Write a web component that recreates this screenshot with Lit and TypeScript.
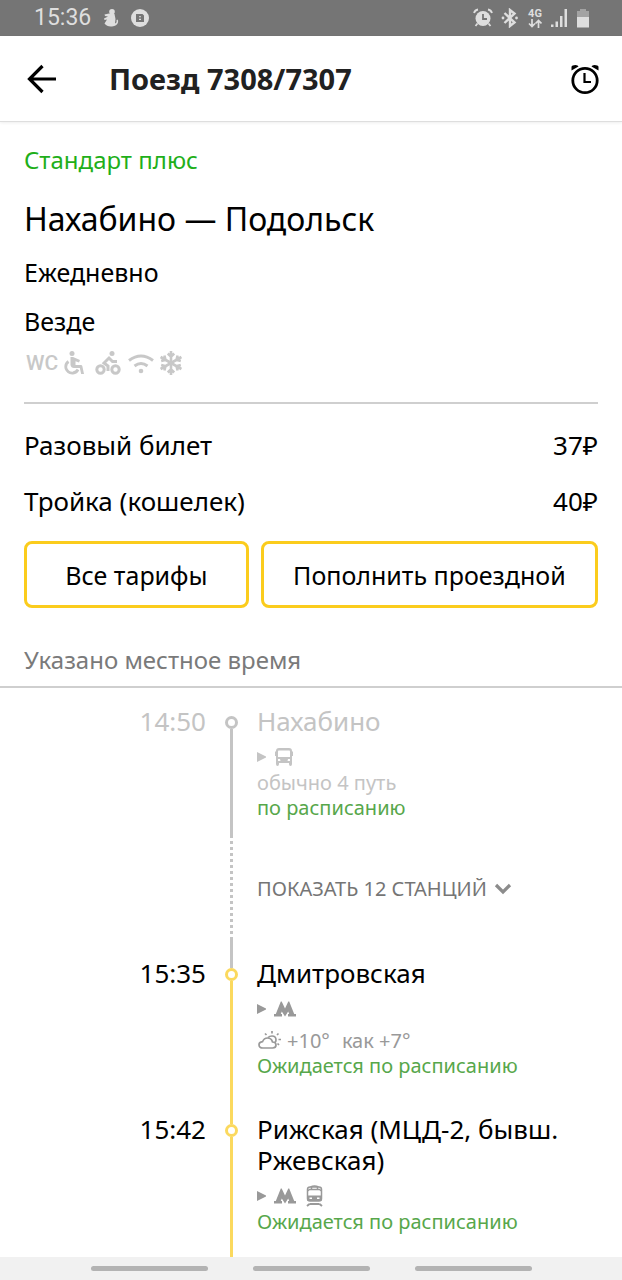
import { LitElement, html, css, svg, nothing } from "lit";
import { customElement, property } from "lit/decorators.js";

type Transfer = "bus" | "metro" | "train";

interface Stop {
  time: string;
  name: string;
  transfers: Transfer[];
  track?: string;
  weather?: { now: string; feels: string };
  status: string;
  passed: boolean;
}

const stops: Stop[] = [
  { time: "14:50", name: "Нахабино", transfers: ["bus"], track: "обычно 4 путь", status: "по расписанию", passed: true },
  { time: "15:35", name: "Дмитровская", transfers: ["metro"], weather: { now: "+10°", feels: "как +7°" }, status: "Ожидается по расписанию", passed: false },
  { time: "15:42", name: "Рижская (МЦД-2, бывш. Ржевская)", transfers: ["metro", "train"], status: "Ожидается по расписанию", passed: false },
];

const transferIcons = {
  bus: html`<svg width="20" height="20" viewBox="0 0 20 20" role="img" aria-label="Автобус">
    <path fill="currentColor" fill-rule="evenodd" d="M5 1h10q3 0 3 3l1 1v4h-1v8q0 2-1.500 2T15 17v-1H5v1q0 2-1.500 2T2 17V9H1V5l1-1q0-3 3-3zM4.500 3.500Q4 3.500 4 5v5h12V5q0-1.500-.500-1.500zM4 12v2h2.500l-.500-2zm12 0h-2l-.500 2H16z"/></svg>`,
  metro: html`<svg width="22" height="16" viewBox="0 0 22 16" role="img" aria-label="Метро">
    <path fill="currentColor" d="M6.800.500h.900L11 7.500l3.300-7h.900L20.200 13H22v2.500h-8V13h1.200l-1-2.500L11 15.500l-3.200-5-1 2.500H8v2.500H0V13h1.800z"/></svg>`,
  train: html`<svg width="20" height="22" viewBox="-2 0 20 22" role="img" aria-label="Поезд">
    <g fill="none" stroke="currentColor" stroke-width="1.500"><rect x="1.500" y="2" width="14" height="14" rx="2.500"/><path d="M4.500 2q4-2 8 0M1.500 6l2-1.500h10l2 1.500M5.500 1.500V4M11.500 1.500V4"/><path stroke-width="2" d="M3.500 19h10M3.500 19 1 21M13.500 19l2.500 2"/></g>
    <path fill="currentColor" fill-rule="evenodd" d="M1.500 10.500h14V16h-14zM3.500 12.500V14H6v-1.500zm7.500 0V14h2.500v-1.500z"/></svg>`,
};

const alarmIcon = html`<svg width="30" height="32" viewBox="0 0 30 32" aria-hidden="true">
  <g fill="none" stroke="currentColor"><circle cx="15" cy="17.500" r="12.200" stroke-width="2.800"/><path d="M14.500 10v9H21" stroke-width="2.200"/></g>
  <path fill="currentColor" d="M1.500 7.500V3.800Q2 2 5.500 2q2.500 0 3 1.500zM28.500 7.500V3.800Q28 2 24.500 2q-2.500 0-3 1.500z"/></svg>`;

@customElement("phone-status")
class PhoneStatus extends LitElement {
  static styles = css`
    :host { display: flex; align-items: center; justify-content: space-between; height: 36px; padding: 0 32px 0 34px; background: #757575; color: #dedede; font-family: Roboto, sans-serif; }
    .group { display: flex; align-items: center; gap: 12px; }
    .clock { font-size: 23px; line-height: 36px; }
    .right { gap: 8px; }
    .net { display: flex; flex-direction: column; align-items: center; width: 16px; font-size: 11px; font-weight: 700; line-height: 10px; }
    svg { display: block; }
  `;
  render() {
    return html`
      <div class="group">
        <span class="clock">15:36</span>
        <svg width="16" height="18" viewBox="0 0 16 18" fill="currentColor" aria-hidden="true">
          <circle cx="9" cy="2.800" r="2.800"/><path d="M6 4.500 1.500 5.500l.500 1.500 3 .500L1 9.500l.500 1.500 2.500-.500-2.500 4Q4 18 9 17.500q5-.500 6-4 .500-2-.500-3l-1 .500q.500 3-1.500 3.500L12.500 10l-1-5z"/></svg>
        <svg width="18" height="18" viewBox="0 0 18 18" aria-hidden="true">
          <circle cx="9" cy="9" r="9" fill="currentColor"/><path fill="#757575" fill-rule="evenodd" d="M5 5h6.500L13 6.500V13H5zM8 7.300v1h2v-1zm0 2.500v1.200h2V9.800z"/></svg>
      </div>
      <div class="group right">
        <svg width="20" height="20" viewBox="0 0 20 20" aria-hidden="true">
          <circle cx="10" cy="10.500" r="7.500" fill="currentColor"/><g fill="none" stroke="currentColor" stroke-width="1.800"><path d="M1 5q1-3 4-3.500M19 5q-1-3-4-3.500M4.500 15.500 2.500 18M15.500 15.500l2 2.500"/><path stroke="#757575" d="M10 6v5h4"/></g></svg>
        <svg width="18" height="20" viewBox="0 0 18 20" aria-hidden="true">
          <path fill="none" stroke="currentColor" stroke-width="2.400" d="m3.500 5 10 9.500L9 18V2l4.500 3.500L3.500 15"/><circle cx="2" cy="10" r="1.400" fill="currentColor"/><circle cx="15.500" cy="10" r="1.400" fill="currentColor"/></svg>
        <span class="net">4G
          <svg width="14" height="9" viewBox="0 0 14 9" fill="none" stroke="currentColor" stroke-width="1.700" aria-hidden="true"><path d="M4 0v7.500M1 4.500l3 3 3-3M10.500 9V1.500M7.500 4.500l3-3 3 3"/></svg></span>
        <svg width="17" height="18" viewBox="0 0 17 18" fill="currentColor" aria-hidden="true"><path d="M0 15.500h2.500V18H0zM4.500 12.500H7V18H4.500zM9 7h2.500v11H9zM13.500 0H16v18h-2.500z"/></svg>
        <svg width="14" height="19" viewBox="0 0 14 19" aria-hidden="true"><path fill="#a3a3a3" d="M4 0h6v2h3v7H1V2h3z"/><path fill="currentColor" d="M1 8h12v10.500H1z"/></svg>
      </div>`;
  }
}

@customElement("route-stop")
class RouteStop extends LitElement {
  @property({ attribute: false }) stop!: Stop;
  @property({ type: Boolean }) first = false;
  @property({ type: Boolean }) arriving = false;

  static styles = css`
    :host { display: grid; grid-template-columns: 206px 51px 1fr; }
    .time, .name { margin: 0; font-size: 26px; font-weight: 400; line-height: 31px; color: #000; }
    .time { padding-top: 18px; text-align: right; }
    .rail { display: flex; flex-direction: column; align-items: center; color: #fbd95e; }
    .lead { width: 3px; height: 28px; background: currentColor; }
    .lead.none { background: none; }
    .lead.grey { background: #c4c4c4; }
    .dot { box-sizing: border-box; width: 13px; height: 13px; border: 3px solid currentColor; border-radius: 50%; }
    .trail { flex: 1; width: 3px; background: currentColor; }
    .body { padding: 18px 24px 18px 0; }
    .links { display: flex; align-items: center; gap: 8px; height: 26px; margin-top: 7px; color: #999; }
    .links svg { display: block; }
    .line { font-size: 20px; line-height: 25px; color: #999; }
    .weather { display: flex; align-items: center; margin-top: 6px; }
    .weather svg { margin-right: 4px; }
    .feels { margin-left: 12px; }
    .status { color: #57a74b; }
    .passed .line:not(.status), .passed.time, .passed .name, .passed.rail, .passed .links { color: #c4c4c4; }
  `;
  render() {
    const s = this.stop;
    const state = s.passed ? "passed" : "";
    return html`
      <time class="time ${state}">${s.time}</time>
      <div class="rail ${state}">
        <span class="lead ${this.first ? "none" : this.arriving ? "grey" : ""}"></span>
        <span class="dot"></span>
        <span class="trail"></span>
      </div>
      <div class="body ${state}">
        <h3 class="name">${s.name}</h3>
        <div class="links">
          <svg width="9" height="10" viewBox="0 0 9 10" aria-hidden="true"><path fill="currentColor" d="M0 0 9 4.500v1L0 10z"/></svg>
          ${s.transfers.map((t) => transferIcons[t])}
        </div>
        ${s.track ? html`<div class="line">${s.track}</div>` : nothing}
        ${s.weather
          ? html`<div class="line weather">
              <svg width="26" height="20" viewBox="0 0 26 20" fill="none" stroke="currentColor" stroke-width="1.700" role="img" aria-label="Переменная облачность">
                <path d="M6 17q-4 0-4-3.300 0-2.700 3.500-3Q7 7 10.500 7q4 0 5 4 3.500 0 3.500 3T15.500 17z"/><path d="M11 6.500Q12.500 5 15 5q4 0 4 4 0 1.500-1 2.500M15 0v2.500M20 4l1.500-1.500M9.500 4 8 2.500M21.500 8.500H24M20.500 12.500l1.500 1.500"/></svg>
              <span>${s.weather.now}</span><span class="feels">${s.weather.feels}</span>
            </div>`
          : nothing}
        <div class="line status">${s.status}</div>
      </div>`;
  }
}

@customElement("app-root")
class AppRoot extends LitElement {
  static styles = css`
    :host { display: flex; flex-direction: column; min-height: 100vh; background: #fff; color: #000; font-family: "Noto Sans", sans-serif; font-size: 25px; line-height: 32px; }
    svg { display: block; }
    button { margin: 0; padding: 0; border: 0; background: none; font: inherit; color: inherit; cursor: pointer; }
    .header { display: flex; align-items: center; height: 85px; padding: 0 22px 0 26px; border-bottom: 1px solid #dedede; box-shadow: 0 1px 3px #00000012; }
    .title { flex: 1; margin: 0 0 0 51px; font-size: 29px; font-weight: 700; line-height: 40px; color: #212121; }
    .info { padding: 22px 24px 0; }
    .type { color: #1faf1a; font-size: 24px; }
    .route { margin: 23px 0 17px; font-size: 32px; font-weight: 400; line-height: 40px; }
    .info p { margin: 0; }
    .where { padding-top: 17px; }
    .amenities { display: flex; align-items: center; gap: 6px; height: 26px; padding: 13px 0 26px 2px; border-bottom: 2px solid #cfcfcf; color: #c8c8c8; }
    .wc { font-family: Roboto, sans-serif; font-size: 21px; font-weight: 500; }
    .fares { margin: 0; padding-top: 25px; font-size: 26px; }
    .fare { display: flex; justify-content: space-between; margin-bottom: 24px; }
    .fare dt, .fare dd { margin: 0; }
    .actions { display: grid; grid-template-columns: 2fr 3fr; gap: 12px; }
    .action { height: 67px; border: 3px solid #fbcc1d; border-radius: 8px; }
    .note { padding: 36px 24px 10px; border-bottom: 2px solid #cfcfcf; color: #7a7a7a; font-size: 24px; }
    .stops { flex: 1; display: flex; flex-direction: column; }
    .stops > :last-child { flex: 1; }
    .more { display: grid; grid-template-columns: 206px 51px 1fr; min-height: 102px; }
    .dots { grid-column: 2; justify-self: center; width: 3px; background: repeating-linear-gradient(#fff 0 3px, #c4c4c4 3px 6px); }
    .expand { display: flex; align-items: center; gap: 7px; justify-self: start; font-size: 20px; color: #757575; }
    .nav { display: flex; justify-content: center; align-items: center; gap: 45px; height: 23px; background: #f1f1f1; }
    .key { width: 117px; height: 5px; border-radius: 3px; background: #b3b3b3; }
  `;
  render() {
    return html`
      <phone-status></phone-status>
      <header class="header">
        <button aria-label="Назад"><svg width="32" height="32" viewBox="0 0 32 32" fill="none" stroke="#000" stroke-width="3.200" aria-hidden="true"><path d="M30 16H4M16.500 3 3.500 16l13 13"/></svg></button>
        <h1 class="title">Поезд 7308/7307</h1>
        <button aria-label="Напоминание">${alarmIcon}</button>
      </header>
      <section class="info">
        <p class="type">Стандарт плюс</p>
        <h2 class="route">Нахабино — Подольск</h2>
        <p>Ежедневно</p>
        <p class="where">Везде</p>
        <div class="amenities">
          <span class="wc">WC</span>
          <svg width="22" height="26" viewBox="0 0 22 26" fill="none" stroke="currentColor" role="img" aria-label="Доступная среда">
            <circle cx="8" cy="3.500" r="2.500" fill="currentColor" stroke="none"/><path fill="currentColor" stroke="none" d="M6.500 7H9l7 3-1 2.500-3.500-1.200V15H17q1 0 1.300 1L20 24h-2.800l-1.400-6H10q-3 0-3.500-3z"/><path d="M4.500 11.500q-3.500 2.500-2.500 7 2 5 7 4.500 3.500-.500 5-3.500" stroke-width="2.800"/></svg>
          <svg width="30" height="26" viewBox="-3 0 30 26" fill="none" stroke="currentColor" stroke-width="3" role="img" aria-label="Перевозка велосипедов">
            <circle cx="5.500" cy="19.500" r="3.700"/><circle cx="20.500" cy="19.500" r="3.700"/><circle cx="17" cy="3.500" r="2.500" fill="currentColor" stroke="none"/><path d="M13 21v-5l-4-3 5-5 3.500 3.500H22"/></svg>
          <svg width="26" height="26" viewBox="1 0 26 26" fill="none" stroke="currentColor" stroke-width="3" role="img" aria-label="Wi-Fi">
            <path d="M2 10.500q12-9 24 0M7.500 16q6.500-5 13 0"/><circle cx="14" cy="21" r="2.300" fill="currentColor" stroke="none"/></svg>
          <svg width="22" height="26" viewBox="1 0 22 26" fill="none" stroke="currentColor" stroke-width="2.600" role="img" aria-label="Кондиционер">
            ${[0, 60, 120, 180, 240, 300].map((a) => svg`<path transform="rotate(${a} 12 13)" d="M12 13V1M8.800 3.500 12 6.700l3.200-3.200"/>`)}</svg>
        </div>
        <dl class="fares">
          <div class="fare"><dt>Разовый билет</dt><dd>37₽</dd></div>
          <div class="fare"><dt>Тройка (кошелек)</dt><dd>40₽</dd></div>
        </dl>
        <div class="actions">
          <button class="action">Все тарифы</button>
          <button class="action">Пополнить проездной</button>
        </div>
      </section>
      <div class="note">Указано местное время</div>
      <main class="stops">
        <route-stop first .stop=${stops[0]}></route-stop>
        <div class="more">
          <span class="dots"></span>
          <button class="expand">ПОКАЗАТЬ 12 СТАНЦИЙ
            <svg width="18" height="12" viewBox="0 0 18 12" fill="none" stroke="#8c8c8c" stroke-width="3.200" aria-hidden="true"><path d="m2 2 7 7 7-7"/></svg></button>
        </div>
        <route-stop arriving .stop=${stops[1]}></route-stop>
        <route-stop .stop=${stops[2]}></route-stop>
      </main>
      <nav class="nav" aria-label="Система">
        <button class="key" aria-label="Недавние"></button>
        <button class="key" aria-label="Домой"></button>
        <button class="key" aria-label="Назад"></button>
      </nav>`;
  }
}
